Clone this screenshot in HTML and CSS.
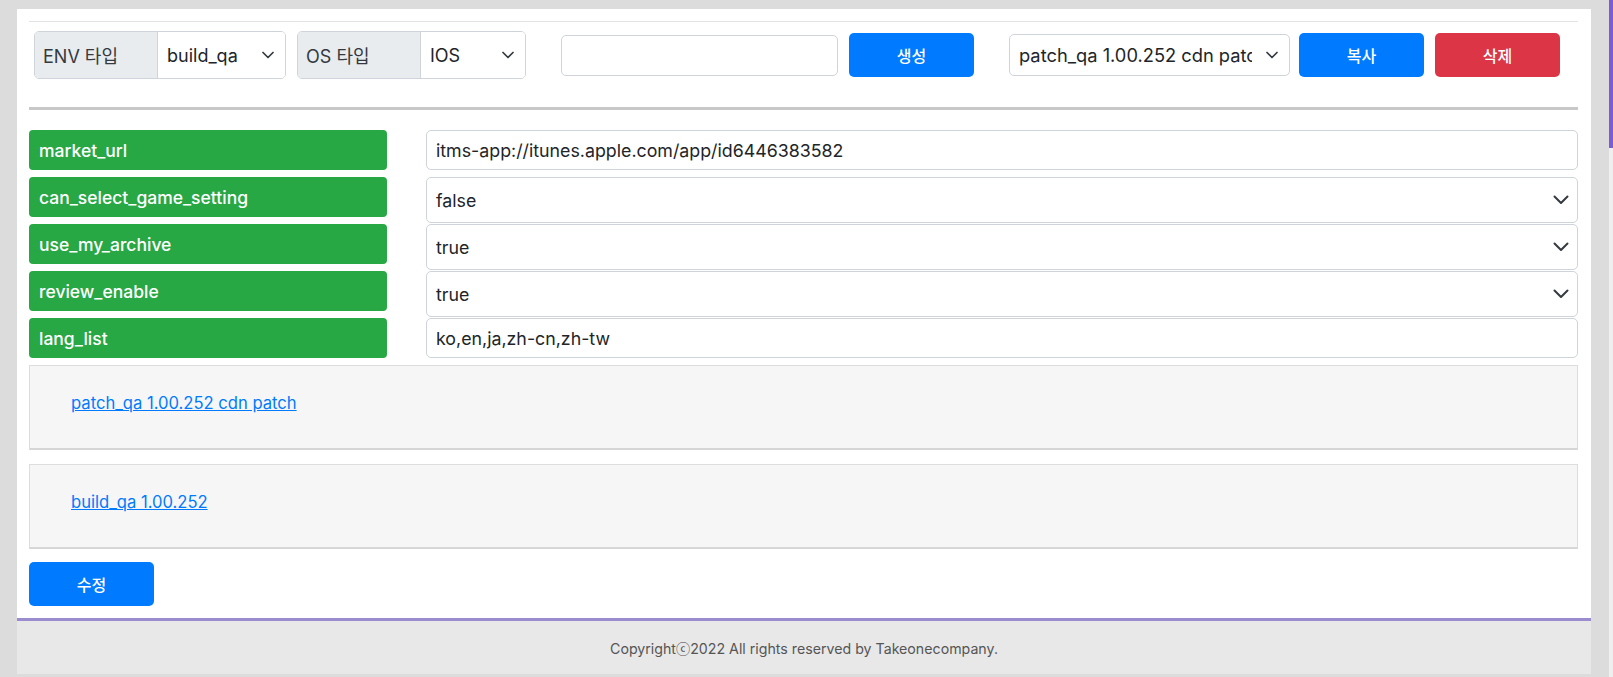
FILE: index.html
```html
<!DOCTYPE html>
<html lang="ko">
<head>
<meta charset="utf-8">
<title>Config</title>
<link rel="stylesheet" href="styles.css">
</head>
<body>
<div class="page">
  <div class="panel">
    <div class="content">
      <hr class="hr-thin">
      <div class="toolbar">
        <div class="group group-env">
          <span class="group-label">ENV 타입</span>
          <div class="select group-select"><span class="select-text">build_qa</span><svg class="chev" width="12" height="8" viewBox="0 0 12 8"><path d="M1 1.5l5 5 5-5"/></svg></div>
        </div>
        <div class="group group-os">
          <span class="group-label">OS 타입</span>
          <div class="select group-select"><span class="select-text">IOS</span><svg class="chev" width="12" height="8" viewBox="0 0 12 8"><path d="M1 1.5l5 5 5-5"/></svg></div>
        </div>
        <input class="text-input name-input" type="text">
        <button class="btn btn-primary btn-create">생성</button>
        <div class="select patch-select"><span class="select-text">patch_qa 1.00.252 cdn patch</span><svg class="chev" width="12" height="8" viewBox="0 0 12 8"><path d="M1 1.5l5 5 5-5"/></svg></div>
        <button class="btn btn-primary btn-copy">복사</button>
        <button class="btn btn-danger btn-delete">삭제</button>
      </div>
      <hr class="hr-thick">
      <div class="fields">
        <div class="field-label">market_url</div>
        <div class="field-value"><div class="text-field">itms-app://itunes.apple.com/app/id6446383582</div></div>
        <div class="field-label">can_select_game_setting</div>
        <div class="field-value"><div class="select value-select"><span class="select-text">false</span><svg class="chev chev-lg" width="16" height="10" viewBox="0 0 16 10"><path d="M1.5 1.5l6.5 6.5 6.5-6.5"/></svg></div></div>
        <div class="field-label">use_my_archive</div>
        <div class="field-value"><div class="select value-select"><span class="select-text">true</span><svg class="chev chev-lg" width="16" height="10" viewBox="0 0 16 10"><path d="M1.5 1.5l6.5 6.5 6.5-6.5"/></svg></div></div>
        <div class="field-label">review_enable</div>
        <div class="field-value"><div class="select value-select"><span class="select-text">true</span><svg class="chev chev-lg" width="16" height="10" viewBox="0 0 16 10"><path d="M1.5 1.5l6.5 6.5 6.5-6.5"/></svg></div></div>
        <div class="field-label">lang_list</div>
        <div class="field-value"><div class="text-field">ko,en,ja,zh-cn,zh-tw</div></div>
      </div>
      <div class="well"><a href="#" class="well-link">patch_qa 1.00.252 cdn patch</a></div>
      <div class="well"><a href="#" class="well-link">build_qa 1.00.252</a></div>
      <button class="btn btn-primary btn-edit">수정</button>
    </div>
    <footer class="footer">Copyrightⓒ2022 All rights reserved by Takeonecompany.</footer>
  </div>
</div>
<div class="scrollbar"><div class="scroll-thumb"></div></div>
</body>
</html>
```

FILE: styles.css
```css
* { box-sizing: border-box; }
html, body { margin: 0; padding: 0; }
body {
  display: flex;
  width: 1613px;
  height: 677px;
  overflow: hidden;
  background: #dcdcdc;
  font-family: Inter, "Noto Sans CJK KR", sans-serif;
  color: #212529;
}
.page {
  flex: 1;
  padding: 9px 18px 4px 17px;
}
.panel {
  background: #fff;
  width: 1574px;
  display: flex;
  flex-direction: column;
}
.content {
  padding: 12px 13px 12px 12px;
}
.hr-thin {
  margin: 0;
  border: 0;
  height: 1px;
  background: #e3e3e3;
}
.toolbar {
  display: flex;
  align-items: center;
  height: 48px;
  margin: 9px 0 28px;
  padding-left: 5px;
}
.group {
  display: flex;
  height: 48px;
  border: 1px solid #ced4da;
  border-radius: 5px;
  overflow: hidden;
  font-size: 18px;
}
.group-env { width: 252px; }
.group-os { width: 229px; margin-left: 11px; }
.group-label {
  width: 123px;
  flex: none;
  display: flex;
  align-items: center;
  padding-left: 8px;
  background: #e9ecef;
  border-right: 1px solid #ced4da;
  color: #343a40;
}
.select {
  display: flex;
  align-items: center;
  background: #fff;
  color: #212529;
  white-space: nowrap;
  overflow: hidden;
}
.select-text {
  flex: 1;
  overflow: hidden;
  min-width: 0;
}
.chev {
  flex: none;
  fill: none;
  stroke: #343a40;
  stroke-width: 1.7;
  stroke-linecap: round;
  stroke-linejoin: round;
}
.chev-lg { stroke-width: 2; }
.group-select {
  flex: 1;
  padding: 0 11px 0 9px;
  font-size: 18px;
}
.text-input {
  width: 277px;
  height: 41px;
  margin-left: 35px;
  border: 1px solid #ced4da;
  border-radius: 5px;
  font: inherit;
}
.btn {
  border: 0;
  border-radius: 5px;
  color: #fff;
  font-family: Inter, "Noto Sans CJK KR", sans-serif;
  font-size: 16px;
  font-weight: 500;
  width: 125px;
  height: 44px;
  padding: 0;
}
.btn-primary { background: #007bff; }
.btn-danger { background: #dc3545; }
.btn-create { margin-left: 11px; }
.patch-select {
  width: 281px;
  height: 42px;
  margin-left: 35px;
  border: 1px solid #ced4da;
  border-radius: 5px;
  padding: 0 11px 0 9px;
  font-size: 18.3px;
}
.patch-select .select-text { margin-right: 14px; }
.btn-copy { margin-left: 9px; }
.btn-delete { margin-left: 11px; }
.hr-thick {
  margin: 0 0 20px;
  border: 0;
  height: 3px;
  background: #c8c8c8;
}
.fields {
  display: grid;
  grid-template-columns: 358px 1fr;
  column-gap: 39px;
  align-items: start;
}
.field-label {
  height: 40px;
  margin-bottom: 7px;
  background: #28a745;
  border-radius: 4px;
  color: #fff;
  font-size: 17.5px;
  font-weight: 500;
  display: flex;
  align-items: center;
  padding-left: 10px;
}
.text-field {
  height: 40px;
  border: 1px solid #ced4da;
  border-radius: 5px;
  display: flex;
  align-items: center;
  padding-left: 9px;
  font-size: 17.8px;
  color: #212529;
}
.value-select {
  height: 46px;
  border: 1px solid #ced4da;
  border-radius: 5px;
  padding: 0 8px 0 9px;
  font-size: 17.8px;
}
.well {
  height: 85px;
  background: #f6f6f6;
  border: 1px solid #ddd;
  border-bottom: 2px solid #d6d6d6;
  padding: 27px 0 0 41px;
  margin-bottom: 14px;
  font-size: 16.6px;
  line-height: 20px;
}
.well-link {
  color: #007bff;
  text-decoration: underline;
}
.btn-edit { display: block; margin-top: -1px; }
.footer {
  border-top: 3px solid #9a8ccf;
  background: #e8e8e8;
  height: 56px;
  display: flex;
  align-items: center;
  justify-content: center;
  font-size: 14.2px;
  color: #555;
}
.scrollbar {
  width: 4px;
  height: 677px;
  background: #efefef;
  flex: none;
}
.scroll-thumb {
  height: 148px;
  background: #7b5cd6;
}
```
